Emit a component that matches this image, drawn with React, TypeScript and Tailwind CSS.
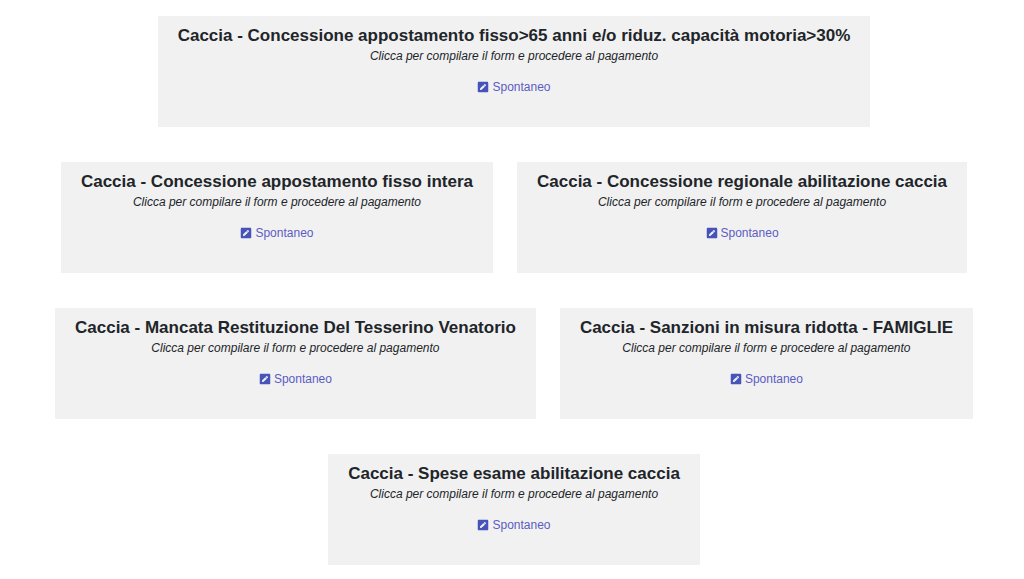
import { FaPenSquare } from 'react-icons/fa';

interface Service {
  id: string;
  title: string;
}

const SERVICES: Service[] = [
  { id: 'appostamento-ridotto', title: 'Caccia - Concessione appostamento fisso>65 anni e/o riduz. capacità motoria>30%' },
  { id: 'appostamento-intera', title: 'Caccia - Concessione appostamento fisso intera' },
  { id: 'abilitazione', title: 'Caccia - Concessione regionale abilitazione caccia' },
  { id: 'tesserino', title: 'Caccia - Mancata Restituzione Del Tesserino Venatorio' },
  { id: 'sanzioni', title: 'Caccia - Sanzioni in misura ridotta - FAMIGLIE' },
  { id: 'esame', title: 'Caccia - Spese esame abilitazione caccia' },
];

function ServiceCard({ id, title }: Service) {
  return (
    <section className="flex flex-col items-center bg-[#f1f1f1] px-5 pt-2 pb-8 text-center text-[#212529]">
      <h2 className="text-[17px] leading-6 font-bold">{title}</h2>
      <p className="text-xs leading-4 italic">Clicca per compilare il form e procedere al pagamento</p>
      <a href={`#${id}`} className="mt-[15px] flex items-center gap-[3px] text-xs leading-4 text-[#5c5cc4] hover:underline">
        <FaPenSquare className="h-3 w-auto text-[#4553ba]" />
        Spontaneo
      </a>
    </section>
  );
}

export default function App() {
  return (
    <main className="flex min-h-screen flex-wrap content-start justify-center gap-x-6 gap-y-[35px] bg-white pt-4 pr-4 pb-3 pl-5 font-['Liberation_Sans',Arial,sans-serif]">
      {SERVICES.map((service) => (
        <ServiceCard key={service.id} {...service} />
      ))}
    </main>
  );
}
